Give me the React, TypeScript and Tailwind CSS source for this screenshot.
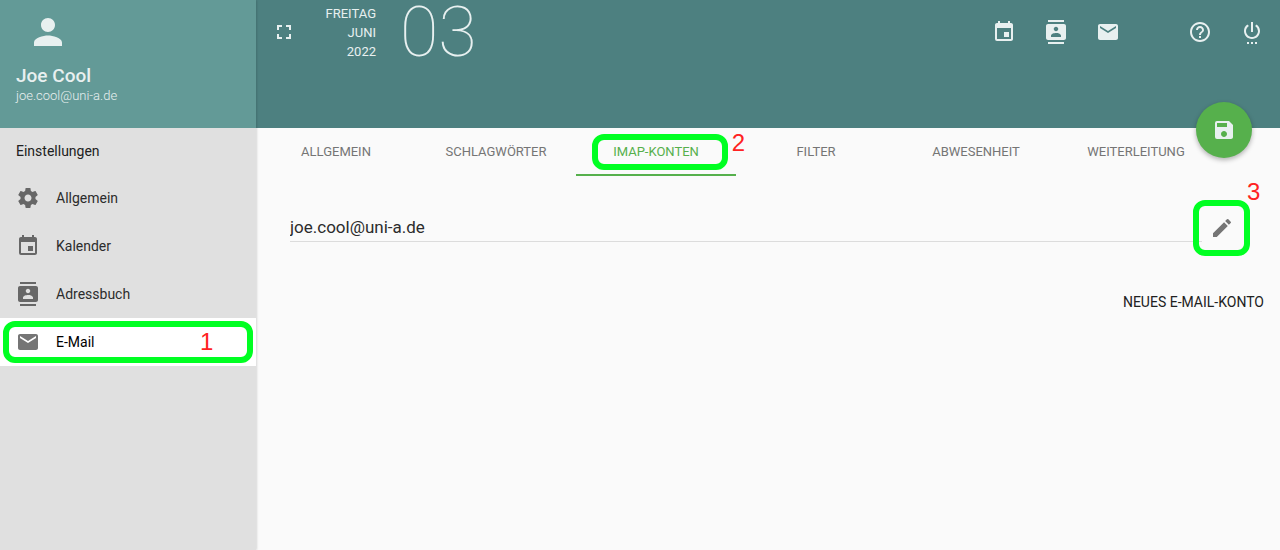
import { useState } from "react";
import type { ReactNode } from "react";
import {
  MdContacts,
  MdEdit,
  MdEmail,
  MdEvent,
  MdFullscreen,
  MdHelpOutline,
  MdPerson,
  MdSave,
  MdSettingsPower,
} from "react-icons/md";

function GearIcon({ size }: { size: number }) {
  return (
    <svg width={size} height={size} viewBox="0 0 24 24" fill="currentColor" aria-hidden="true">
      <path d="M19.43 12.98c.04-.32.07-.64.07-.98s-.03-.66-.07-.98l2.11-1.65c.19-.15.24-.42.12-.64l-2-3.46c-.12-.22-.39-.3-.61-.22l-2.49 1c-.52-.4-1.08-.73-1.69-.98l-.38-2.65C14.46 2.18 14.25 2 14 2h-4c-.25 0-.46.18-.49.42l-.38 2.65c-.61.25-1.17.59-1.69.98l-2.49-1c-.23-.09-.49 0-.61.22l-2 3.46c-.13.22-.07.49.12.64l2.11 1.65c-.04.32-.07.65-.07.98s.03.66.07.98l-2.11 1.65c-.19.15-.24.42-.12.64l2 3.46c.12.22.39.3.61.22l2.49-1c.52.4 1.08.73 1.69.98l.38 2.65c.03.24.24.42.49.42h4c.25 0 .46-.18.49-.42l.38-2.65c.61-.25 1.17-.59 1.69-.98l2.49 1c.23.09.49 0 .61-.22l2-3.46c.12-.22.07-.49-.12-.64l-2.11-1.65zM12 15.5c-1.93 0-3.5-1.57-3.5-3.5s1.57-3.5 3.5-3.5 3.5 1.57 3.5 3.5-1.57 3.5-3.5 3.5z" />
    </svg>
  );
}

const SECTIONS = [
  { value: "general", label: "Allgemein", icon: <GearIcon size={24} /> },
  { value: "calendar", label: "Kalender", icon: <MdEvent size={24} /> },
  { value: "contacts", label: "Adressbuch", icon: <MdContacts size={24} /> },
  { value: "mail", label: "E-Mail", icon: <MdEmail size={24} /> },
];

const TABS = [
  { value: "general", label: "ALLGEMEIN" },
  { value: "labels", label: "SCHLAGWÖRTER" },
  { value: "imap", label: "IMAP-KONTEN" },
  { value: "filter", label: "FILTER" },
  { value: "vacation", label: "ABWESENHEIT" },
  { value: "forward", label: "WEITERLEITUNG" },
];

// Numbered frame around the control that a step refers to
function Marker({ step, frame, number }: { step: number; frame: string; number: string }) {
  return (
    <>
      <span className={`pointer-events-none absolute rounded-xl border-6 border-[#00ff22] ${frame}`} />
      <span
        className={`pointer-events-none absolute font-['Liberation_Sans',sans-serif] text-2xl leading-6 font-normal text-[#ff2222] ${number}`}
      >
        {step}
      </span>
    </>
  );
}

function IconButton({ label, children }: { label: string; children: ReactNode }) {
  return (
    <button type="button" aria-label={label} className="flex size-10 items-center justify-center">
      {children}
    </button>
  );
}

function Sidebar() {
  const [section, setSection] = useState("mail");

  return (
    <aside className="z-10 flex w-64 shrink-0 flex-col bg-[#e0e0e0] shadow-[1px_0_2px_rgba(0,0,0,0.14)]">
      <div className="flex h-32 flex-col bg-[#639a97] px-4 pt-[11px] text-[#e8f0f0]">
        <MdPerson size={42} className="ml-[11px]" />
        <p className="mt-3 text-[19px] leading-[22px] font-medium">Joe Cool</p>
        <p className="text-[13px] leading-[18px] font-light">joe.cool@uni-a.de</p>
      </div>
      <h2 className="px-4 py-3 text-sm leading-[22px] text-[#212121]">Einstellungen</h2>
      <nav>
        {SECTIONS.map((s) => (
          <a
            key={s.value}
            href={`#${s.value}`}
            onClick={() => setSection(s.value)}
            className={`relative flex h-12 items-center gap-4 px-4 text-sm ${
              section === s.value ? "bg-white text-black" : "text-[#2c2c2c]"
            }`}
          >
            <span className={section === s.value ? "text-[#757575]" : "text-[#676767]"}>{s.icon}</span>
            {s.label}
            {s.value === "mail" && <Marker step={1} frame="inset-[3px]" number="top-3 left-[200px]" />}
          </a>
        ))}
      </nav>
    </aside>
  );
}

function Header() {
  return (
    <header className="relative flex h-32 items-start justify-between bg-[#4d8080] px-2 text-[#e8f0f0]">
      <div className="flex">
        <div className="pt-3">
          <IconButton label="Vollbild">
            <MdFullscreen size={24} />
          </IconButton>
        </div>
        <div className="flex w-[72px] flex-col pt-1 text-right text-[13px] leading-[19px]">
          <span>FREITAG</span>
          <span>JUNI</span>
          <span>2022</span>
        </div>
        <time dateTime="2022-06-03" className="pl-6 text-[70px] leading-16 font-thin">
          03
        </time>
      </div>
      <div className="flex gap-3 pt-3">
        <IconButton label="Kalender">
          <MdEvent size={24} />
        </IconButton>
        <IconButton label="Adressbuch">
          <MdContacts size={24} />
        </IconButton>
        <IconButton label="E-Mail">
          <MdEmail size={24} />
        </IconButton>
        <div className="ml-10">
          <IconButton label="Hilfe">
            <MdHelpOutline size={24} />
          </IconButton>
        </div>
        <IconButton label="Abmelden">
          <MdSettingsPower size={24} />
        </IconButton>
      </div>
      <button
        type="button"
        aria-label="Speichern"
        className="absolute right-7 -bottom-[30px] z-10 flex size-14 items-center justify-center rounded-full bg-[#56b04c] shadow-[0_2px_5px_rgba(0,0,0,0.3)]"
      >
        <MdSave size={24} />
      </button>
    </header>
  );
}

export default function App() {
  const [tab, setTab] = useState("imap");
  const [account, setAccount] = useState("joe.cool@uni-a.de");

  return (
    <div className="flex min-h-screen bg-[#fafafa] font-['Roboto','Noto_Sans',sans-serif]">
      <Sidebar />
      <div className="flex min-w-0 flex-1 flex-col">
        <Header />

        {/* Tabs */}
        <div role="tablist" className="flex pr-16">
          {TABS.map((t) => (
            <button
              key={t.value}
              type="button"
              role="tab"
              aria-selected={tab === t.value}
              onClick={() => setTab(t.value)}
              className={`relative h-12 flex-1 border-b-2 pt-[2px] text-[13px] ${
                tab === t.value ? "border-[#56b04c] text-[#56b04c]" : "border-transparent text-[#757575]"
              }`}
            >
              {t.label}
              {t.value === "imap" && (
                <Marker step={2} frame="top-[6px] left-4 right-2 h-9" number="top-[3px] -right-[9px]" />
              )}
            </button>
          ))}
        </div>

        {/* Accounts */}
        <main className="flex flex-col pt-8 pr-4">
          <div className="flex items-start pr-[22px] pl-[34px]">
            <input
              type="email"
              aria-label="IMAP-Konto"
              value={account}
              onChange={(e) => setAccount(e.target.value)}
              className="mt-1 h-[30px] min-w-0 flex-1 border-b border-[#dcdcdc] bg-transparent text-[17px] text-[#2c2c2c] outline-none"
            />
            <div className="relative text-[#757575]">
              <IconButton label="Konto bearbeiten">
                <MdEdit size={24} />
              </IconButton>
              <Marker step={3} frame="-top-2 -left-[9px] h-14 w-[57px]" number="-top-7 left-[45px]" />
            </div>
          </div>
          <button type="button" className="mt-9 h-9 self-end text-sm text-[#212121]">
            NEUES E-MAIL-KONTO
          </button>
        </main>
      </div>
    </div>
  );
}
